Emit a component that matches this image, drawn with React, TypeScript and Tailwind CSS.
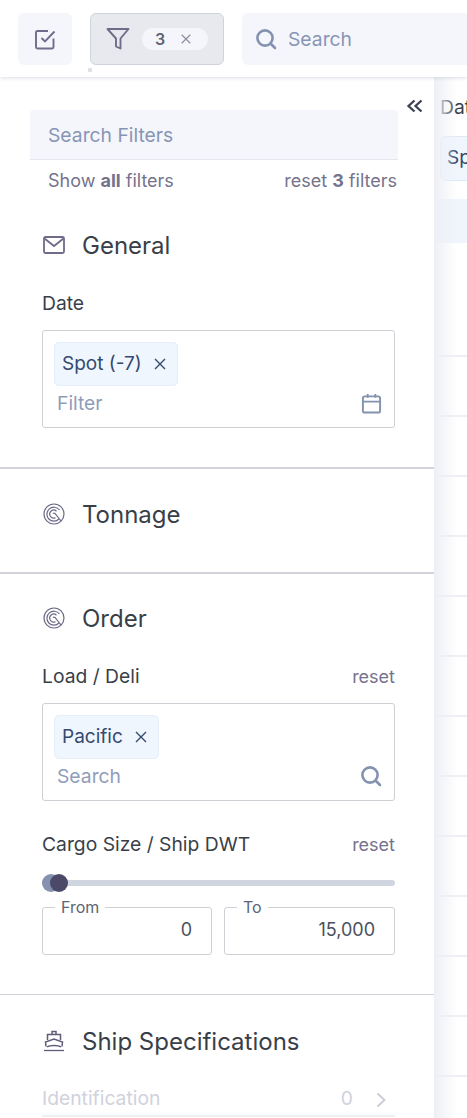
import { ReactNode } from 'react';

const font = { fontFamily: 'Inter, "Noto Sans", sans-serif' };

function CloseIcon({ className }: { className: string }) {
  return (
    <svg viewBox="0 0 14 14" fill="none" stroke="currentColor" strokeWidth="1.4" className={className}>
      <path d="M2 2l10 10M12 2L2 12" />
    </svg>
  );
}

function SearchIcon({ className }: { className: string }) {
  return (
    <svg viewBox="0 0 22 22" fill="none" stroke="currentColor" strokeWidth="2.6" strokeLinecap="round" className={className}>
      <circle cx="10" cy="10" r="7.6" />
      <path d="M16 16l4 4" />
    </svg>
  );
}

function RingIcon() {
  return (
    <svg viewBox="0 0 22 22" fill="none" stroke="#6b6986" strokeWidth="1.2" className="w-[22px] h-[22px]">
      <circle cx="11" cy="11" r="10" />
      <path d="M16.5 7a7 7 0 1 0-.5 9" />
      <path d="M13.5 8.2a4 4 0 1 0-1 6.5" />
      <path d="M10 10.5a1.6 1.6 0 0 1 2 0L18 18" />
    </svg>
  );
}

function MailIcon() {
  return (
    <svg viewBox="0 0 22 18" fill="none" stroke="#6f6c8a" strokeWidth="1.8" className="w-[22px] h-[18px]">
      <rect x="1" y="1" width="20" height="16" rx="1.5" />
      <path d="M1.5 2.5L11 10l9.500-7.500" />
    </svg>
  );
}

function ShipIcon() {
  return (
    <svg viewBox="0 0 22 22" fill="none" stroke="#5f5d7a" strokeWidth="1.5" className="w-[22px] h-[22px]">
      <path d="M9 4V1.500h4V4" />
      <path d="M4.500 10V4.500h13V10" />
      <path d="M3 16.500L2.500 12 11 9l8.500 3-.5 4.500" />
      <path d="M4 17c2-1.500 4.500-1.500 7-1.500s5 0 7 1.500" />
      <path d="M1 20.500h20" strokeWidth="1.300" />
    </svg>
  );
}

function Chip({ label }: { label: string }) {
  return (
    <div className="inline-flex items-center gap-[11px] h-[44px] pl-[7px] pr-[10px] rounded-[5px] border border-[#e6eef8] bg-[#f0f6fd] text-[19px] text-[#34496f]">
      {label}
      <CloseIcon className="w-[14px] h-[14px] text-[#34496f]" />
    </div>
  );
}

function SectionTitle({ icon, title }: { icon: ReactNode; title: string }) {
  return (
    <div className="flex items-center h-[30px] pl-[43px]">
      <div className="w-[39px] flex items-center">{icon}</div>
      <span className="text-[24px] mt-[1px] text-[#393f49]">{title}</span>
    </div>
  );
}

function Label({ text, reset }: { text: string; reset?: boolean }) {
  return (
    <div className="flex items-center justify-between h-[24px] mx-[42px] w-[353px]">
      <span className="text-[19.300px] text-[#393f49]">{text}</span>
      {reset && <span className="text-[18px] text-[#75738c]">reset</span>}
    </div>
  );
}

function TokenBox({ chip, placeholder, icon }: { chip: string; placeholder: string; icon: ReactNode }) {
  return (
    <div className="ml-[42px] w-[353px] h-[98px] border border-[#cfd0d6] rounded-[3px] pl-[11px] pr-[12px] pt-[11px]">
      <Chip label={chip} />
      <div className="flex items-center justify-between h-[32px] mt-[1px] pl-[3px]">
        <span className="text-[19.300px] text-[#8f9dba]">{placeholder}</span>
        {icon}
      </div>
    </div>
  );
}

function RangeField({ label, value, width }: { label: string; value: string; width: string }) {
  return (
    <fieldset className={`${width} h-[55px] border border-[#cfd0d6] rounded-[3px] px-[11px] -mt-[6px]`}>
      <legend className="text-[16px] leading-[14px] text-[#5d6472] px-[6px] ml-[1px]">{label}</legend>
      <div className="text-right text-[18px] text-[#4a505c] pr-[8px] leading-[24px] mt-[4px]">{value}</div>
    </fieldset>
  );
}

function FilterPanel() {
  return (
    <div className="relative w-[434px] shrink-0 bg-white pt-[33px] overflow-hidden">
      <button className="absolute left-[406px] top-[21px] text-[#3d4350]">
        <svg viewBox="0 0 18 16" fill="none" stroke="currentColor" strokeWidth="2.300" className="w-[18px] h-[16px]">
          <path d="M8.500 2.500L2.500 8l6 5.500M15.500 2.500L9.500 8l6 5.500" />
        </svg>
      </button>

      <div className="ml-[30px] w-[368px] h-[50px] bg-[#f5f6fb] border-b border-[#e2e7ef] rounded-t-[4px] pl-[18px] pt-[2px] flex items-center text-[19.300px] text-[#8795b4]">
        Search Filters
      </div>
      <div className="flex justify-between ml-[48px] w-[349px] mt-[8px] h-[24px] items-center text-[18px] text-[#75738c]">
        <span>Show <b className="font-bold">all</b> filters</span>
        <span>reset <b className="font-bold">3</b> filters</span>
      </div>

      <div className="pt-[38px] pb-[39px] border-b-2 border-[#d2d3da]">
        <SectionTitle icon={<MailIcon />} title="General" />
        <div className="mt-[31px] mb-[15px]"><Label text="Date" /></div>
        <TokenBox
          chip="Spot (-7)"
          placeholder="Filter"
          icon={
            <svg viewBox="0 0 22 22" fill="none" stroke="#8492b0" strokeWidth="2" className="w-[21px] h-[21px]">
              <rect x="2" y="3.500" width="18" height="17" rx="2" />
              <path d="M2 9h18M7 1v4M15 1v4" />
            </svg>
          }
        />
      </div>

      <div className="pt-[30px] pb-[43px] border-b-2 border-[#d2d3da]">
        <SectionTitle icon={<RingIcon />} title="Tonnage" />
      </div>

      <div className="pt-[29px] pb-[39px] border-b border-[#d2d3da]">
        <SectionTitle icon={<RingIcon />} title="Order" />
        <div className="mt-[31px] mb-[15px]"><Label text="Load / Deli" reset /></div>
        <TokenBox
          chip="Pacific"
          placeholder="Search"
          icon={<SearchIcon className="w-[22px] h-[22px] text-[#8492b0]" />}
        />
        <div className="mt-[31px]"><Label text="Cargo Size / Ship DWT" reset /></div>
        <div className="relative ml-[42px] w-[353px] h-[6px] mt-[24px] rounded-full bg-[#d0d6e0]">
          <div className="absolute left-0 -top-[6px] w-[18px] h-[18px] rounded-full bg-[#8492b0]" />
          <div className="absolute left-[8px] -top-[6px] w-[18px] h-[18px] rounded-full bg-[#4b4868]" />
        </div>
        <div className="flex gap-[12px] ml-[42px] mt-[20px]">
          <RangeField label="From" value="0" width="w-[170px]" />
          <RangeField label="To" value="15,000" width="w-[171px]" />
        </div>
      </div>

      <div className="pt-[31px]">
        <SectionTitle icon={<ShipIcon />} title="Ship Specifications" />
        <div className="flex items-center justify-between ml-[42px] w-[353px] h-[36px] mt-[25px] border-b-2 border-[#eeeff2] text-[19.300px] text-[#d0d2dc]">
          <span>Identification</span>
          <div className="flex items-center gap-[23px] pr-[9px]">
            <span>0</span>
            <svg viewBox="0 0 10 16" fill="none" stroke="#c9cbd5" strokeWidth="1.800" className="w-[10px] h-[16px] mt-[3px]">
              <path d="M1.500 1.500L8.500 8l-7 6.500" />
            </svg>
          </div>
        </div>
      </div>
    </div>
  );
}

function ResultsPane() {
  const rows = Array.from({ length: 13 }, (_, i) => i);
  return (
    <div className="relative flex-1 overflow-hidden border-l border-[#eceef3] pt-[18px]">
      <div className="text-[19.300px] leading-[24px] pl-[5px] whitespace-nowrap text-[#393f49]">Date</div>
      <div className="ml-[5px] mt-[17px] w-[60px] h-[45px] rounded-[5px] border border-[#e0e9f5] bg-[#f0f6fd] text-[19px] text-[#34496f] pl-[6px] flex items-center">
        Spot
      </div>
      <div className="h-[44px] mt-[18px] bg-[#eff5fc]" />
      <div className="h-[114px] border-b-2 border-[#eeeff3]" />
      {rows.map((r) => (
        <div key={r} className="h-[60px] border-b-2 border-[#eeeff3]" />
      ))}
      <div className="absolute inset-y-0 left-0 w-[22px] bg-gradient-to-r from-[#eef0f6] to-transparent" />
    </div>
  );
}

export default function App() {
  return (
    <div className="w-[467px] h-[1118px] overflow-hidden bg-white flex flex-col" style={font}>
      <header className="relative z-10 h-[77px] shrink-0 bg-white shadow-[0_1px_4px_rgba(40,50,80,0.16)] flex items-center pl-[18px] pt-[1px] gap-[18px] overflow-hidden">
        <button className="w-[54px] h-[52px] shrink-0 rounded-[6px] bg-[#f5f6fb] flex items-center justify-center">
          <svg viewBox="0 0 22 22" fill="none" stroke="#6f6c8a" strokeWidth="1.900" className="w-[22px] h-[22px]">
            <path d="M19.500 10.500V19a1.500 1.500 0 0 1-1.500 1.500H3.500A1.500 1.500 0 0 1 2 19V4.500A1.500 1.500 0 0 1 3.500 3H14" />
            <path d="M7.500 10l3.500 3.500L20.500 3.500" />
          </svg>
        </button>
        <button className="w-[134px] h-[52px] shrink-0 rounded-[6px] bg-[#e7e9ef] border border-[#cfd4dc] flex items-center pl-[15px]">
          <svg viewBox="0 0 24 22" fill="none" stroke="#6f6c8a" strokeWidth="1.900" strokeLinejoin="round" className="w-[24px] h-[22px]">
            <path d="M1.500 1h21L14.500 10.500V20.500L10 18.500V10.500Z" />
          </svg>
          <div className="ml-[12px] w-[66px] h-[22px] rounded-full bg-[#f5f6fb] flex items-center pl-[13px] gap-[15px]">
            <span className="text-[16px] font-semibold text-[#5f6270]">3</span>
            <CloseIcon className="w-[12px] h-[12px] text-[#8b8ea0]" />
          </div>
        </button>
        <div className="h-[52px] flex-1 min-w-[260px] rounded-[6px] bg-[#f5f6fb] flex items-center pl-[13px] gap-[11px]">
          <SearchIcon className="w-[22px] h-[22px] text-[#8492b0]" />
          <span className="text-[19.300px] text-[#8795b4]">Search</span>
        </div>
        <div className="absolute left-[88px] top-[68px] w-[4px] h-[4px] bg-[#dfe1e6]" />
      </header>
      <div className="flex flex-1 min-h-0">
        <FilterPanel />
        <ResultsPane />
      </div>
    </div>
  );
}
